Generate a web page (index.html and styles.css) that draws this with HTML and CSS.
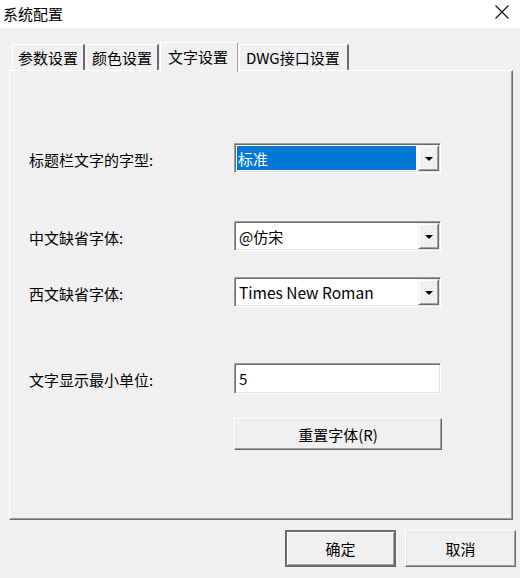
FILE: index.html
```html
<!DOCTYPE html>
<html lang="zh-CN">
<head>
  <meta charset="UTF-8" />
  <meta name="viewport" content="width=device-width, initial-scale=1.0" />
  <title>系统配置</title>
  <link rel="stylesheet" href="styles.css">
</head>
<body>
  <div class="titlebar">
    <span class="title">系统配置</span>
    <svg class="close" width="14" height="14" viewBox="0 0 14 14">
      <path d="M0.5 0.5 L13.5 13.5 M13.5 0.5 L0.5 13.5" stroke="#111" stroke-width="1.1" fill="none" />
    </svg>
  </div>

  <div class="tabs">
    <div class="tab">参数设置</div>
    <div class="tab">颜色设置</div>
    <div class="tab active">文字设置</div>
    <div class="tab wide">DWG接口设置</div>
  </div>

  <div class="panel">
    <div class="row row-first">
      <span class="label">标题栏文字的字型:</span>
      <div class="combo">
        <span class="value selected">标准</span>
        <span class="drop"><span class="arrow"></span></span>
      </div>
    </div>
    <div class="row row-second">
      <span class="label">中文缺省字体:</span>
      <div class="combo">
        <span class="value">@仿宋</span>
        <span class="drop"><span class="arrow"></span></span>
      </div>
    </div>
    <div class="row row-third">
      <span class="label">西文缺省字体:</span>
      <div class="combo">
        <span class="value latin">Times New Roman</span>
        <span class="drop"><span class="arrow"></span></span>
      </div>
    </div>
    <div class="row row-fourth">
      <span class="label">文字显示最小单位:</span>
      <div class="combo edit">
        <span class="value">5</span>
      </div>
    </div>
    <div class="row row-fifth">
      <span></span>
      <button class="btn reset">重置字体(R)</button>
    </div>
  </div>

  <div class="footer">
    <button class="btn default">确定</button>
    <button class="btn">取消</button>
  </div>
</body>
</html>
```

FILE: styles.css
```css
body {
  margin: 0;
  width: 520px;
  height: 578px;
  background-color: #f0f0f0;
  font-family: "Noto Sans CJK SC", "Noto Sans", sans-serif;
  font-size: 15px;
  color: #000;
  overflow: hidden;
}
.titlebar {
  height: 28px;
  background-color: #fff;
  display: flex;
  align-items: center;
  justify-content: space-between;
  padding: 0 11px 0 3px;
}
.title {
  font-size: 15px;
  line-height: 1;
  margin-top: -2px;
}
.close {
  margin-top: -5px;
}
.tabs {
  display: flex;
  align-items: flex-end;
  margin-top: 13px;
  padding-left: 12px;
  height: 29px;
}
.tab {
  height: 25px;
  line-height: 25px;
  padding: 0 5px;
  margin-right: 1px;
  border-top: 1px solid #fff;
  border-left: 1px solid #fff;
  border-right: 2px solid #6d6d6d;
  box-sizing: content-box;
  white-space: nowrap;
}
.tab.wide {
  padding: 0 7px 0 6px;
}
.tab.active {
  height: 29px;
  line-height: 27px;
  padding: 0 9px 0 7px;
  margin-bottom: -2px;
  background-color: #f0f0f0;
  border-right: 1px solid #a0a0a0;
  position: relative;
  z-index: 1;
}
.panel {
  margin-left: 9px;
  width: 502px;
  border: 1px solid;
  border-color: #fff #6d6d6d #6d6d6d #fff;
  box-shadow: inset -1px -1px 0 #a0a0a0;
  padding-top: 72px;
  box-sizing: content-box;
  height: 376px;
}
.row {
  display: grid;
  grid-template-columns: 205px 207px;
  align-items: center;
  padding-left: 19px;
}
.row-second { margin-top: 48px; }
.row-third { margin-top: 26px; }
.row-fourth { margin-top: 56px; }
.row-fifth { margin-top: 24px; }
.label {
  white-space: nowrap;
  margin-top: 2px;
}
.combo {
  height: 30px;
  box-sizing: border-box;
  border: 1px solid;
  border-color: #a0a0a0 #fff #fff #a0a0a0;
  box-shadow: inset 1px 1px 0 #696969, inset -1px -1px 0 #e3e3e3;
  background-color: #fff;
  display: flex;
  padding: 1px;
}
.combo.edit {
  height: 31px;
}
.value {
  flex: 1;
  display: flex;
  align-items: center;
  padding-left: 2px;
  margin: 1px 2px 1px 1px;
  white-space: nowrap;
}
.value.latin {
  font-size: 15.5px;
}
.value.selected {
  background-color: #0078d7;
  color: #fff;
  padding-left: 1px;
}
.drop {
  width: 21px;
  box-sizing: border-box;
  background-color: #f0f0f0;
  border: 1px solid;
  border-color: #f0f0f0 #696969 #696969 #f0f0f0;
  box-shadow: inset 1px 1px 0 #fff, inset -1px -1px 0 #a0a0a0;
  display: flex;
  align-items: center;
  justify-content: center;
}
.arrow {
  width: 0;
  height: 0;
  border-left: 4px solid transparent;
  border-right: 4px solid transparent;
  border-top: 4px solid #000;
  margin-top: 2px;
}
.btn {
  font-family: "Noto Sans CJK SC", "Noto Sans", sans-serif;
  font-size: 15px;
  color: #000;
  background-color: #f0f0f0;
  border: 1px solid;
  border-color: #fff #696969 #696969 #fff;
  box-shadow: inset -1px -1px 0 #a0a0a0, inset 1px 1px 0 #e3e3e3;
  padding: 0;
  margin: 0;
}
.reset {
  width: 208px;
  height: 32px;
}
.footer {
  display: flex;
  justify-content: flex-end;
  gap: 9px;
  margin-top: 10px;
  padding-right: 4px;
}
.footer .btn {
  width: 111px;
  height: 37px;
}
.btn.default {
  border: 2px solid #6a6a6a;
  box-shadow: inset 1px 1px 0 #fff, inset -1px -1px 0 #a0a0a0;
}
```
